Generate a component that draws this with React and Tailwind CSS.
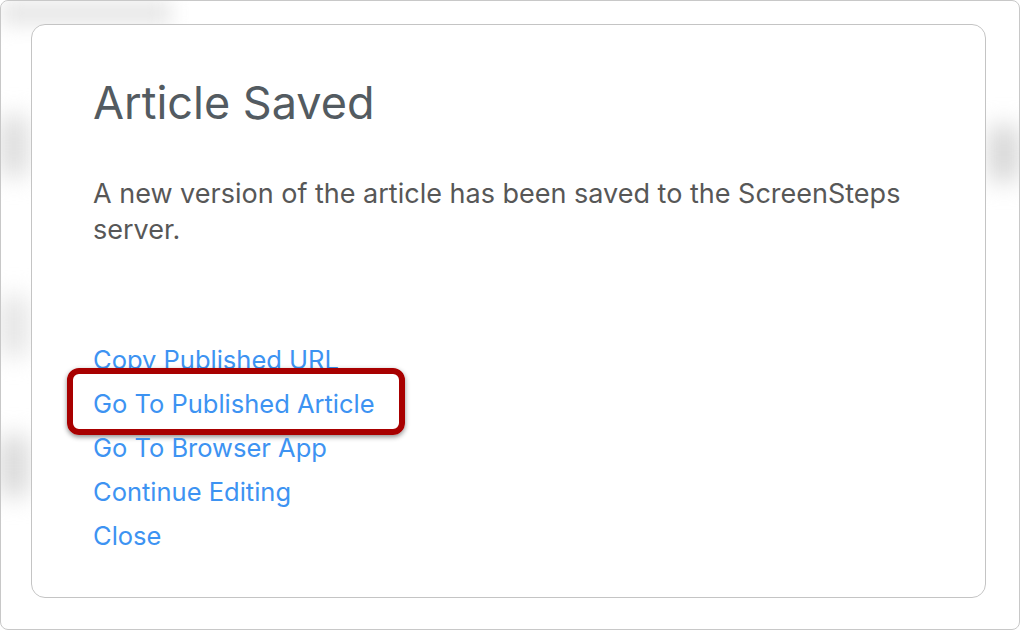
export default function App() {
  const links = [
    "Copy Published URL",
    "Go To Published Article",
    "Go To Browser App",
    "Continue Editing",
    "Close",
  ];

  return (
    <div className="w-[1020px] h-[630px] bg-white font-['Inter',sans-serif]">
      {/* outer frame with blurred background */}
      <div className="relative w-full h-full rounded-[8px] border border-[#c8c8c8] bg-white overflow-hidden pt-[23px] pl-[30px] pr-[33px] pb-[31px]">
        <div className="absolute left-0 top-0 w-[170px] h-[24px] bg-[#e6e6e6] blur-[10px]" />
        <div className="absolute left-0 top-[115px] w-[26px] h-[60px] bg-[#d9d9d9] blur-[12px]" />
        <div className="absolute left-0 top-[295px] w-[26px] h-[60px] bg-[#e2e2e2] blur-[12px]" />
        <div className="absolute left-0 top-[435px] w-[26px] h-[60px] bg-[#d4d4d4] blur-[12px]" />
        <div className="absolute right-0 top-[125px] w-[30px] h-[55px] bg-[#d4d4d4] blur-[12px]" />

        {/* dialog card */}
        <div className="relative h-full rounded-[14px] border-[1.5px] border-[#c4c4c4] bg-white pl-[61px] pr-[60px] pt-[53px]">
          <h1 className="text-[45px] leading-[50px] text-[#535b61]">
            Article Saved
          </h1>
          <p className="mt-[48px] text-[27px] leading-[36px] text-[#575757]">
            A new version of the article has been saved to the ScreenSteps
            server.
          </p>
          <div className="mt-[90px] flex flex-col">
            {links.map((label, i) => (
              <div key={i} className="relative h-[44px] flex items-center">
                {i === 1 && (
                  <div className="absolute left-[-26px] top-[-14px] w-[338px] h-[67px] rounded-[12px] border-[6px] border-[#a80000] shadow-[0_2px_5px_rgba(0,0,0,0.45)]" />
                )}
                <span className="relative text-[25.5px] text-[#3d93f2]">
                  {label}
                </span>
              </div>
            ))}
          </div>
        </div>
      </div>
    </div>
  );
}
